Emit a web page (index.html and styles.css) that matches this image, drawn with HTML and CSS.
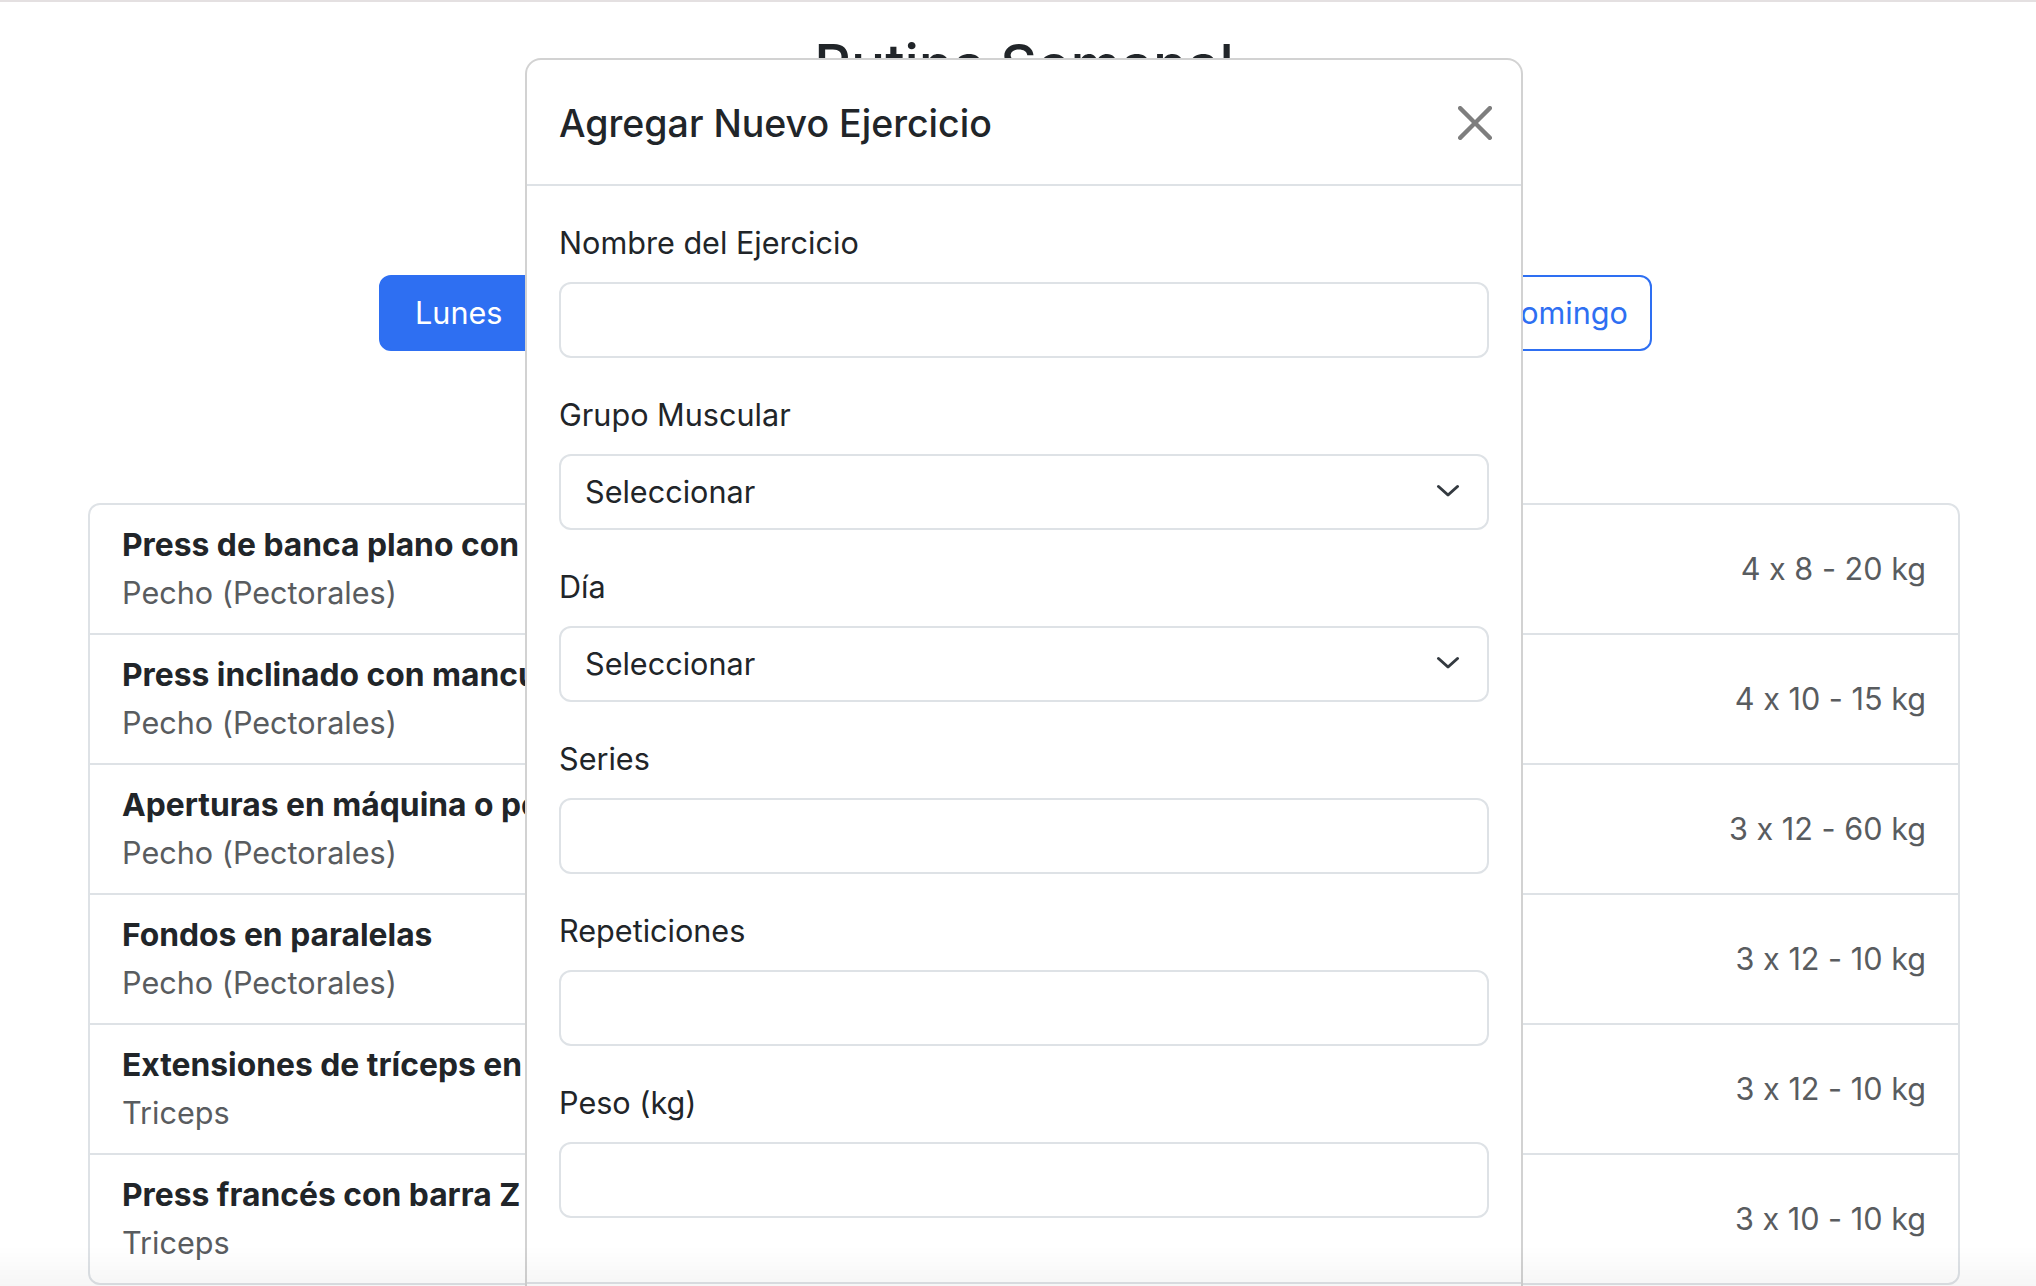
FILE: index.html
```html
<!DOCTYPE html>
<html lang="es">
<head>
<meta charset="utf-8">
<title>Rutina Semanal</title>
<link rel="stylesheet" href="styles.css">
</head>
<body>
<main class="page">
  <h2 class="page-title">Rutina Semanal</h2>
  <nav class="days">
    <button class="day day-active">Lunes</button>
    <button class="day">Martes</button>
    <button class="day">Miércoles</button>
    <button class="day">Jueves</button>
    <button class="day">Viernes</button>
    <button class="day">Sábado</button>
    <button class="day">Domingo</button>
  </nav>
  <ul class="exercise-list">
    <li class="exercise">
      <div class="exercise-info">
        <div class="exercise-name">Press de banca plano con barra</div>
        <div class="exercise-group">Pecho (Pectorales)</div>
      </div>
      <div class="exercise-stats">4 x 8 - 20 kg</div>
    </li>
    <li class="exercise">
      <div class="exercise-info">
        <div class="exercise-name">Press inclinado con mancuernas</div>
        <div class="exercise-group">Pecho (Pectorales)</div>
      </div>
      <div class="exercise-stats">4 x 10 - 15 kg</div>
    </li>
    <li class="exercise">
      <div class="exercise-info">
        <div class="exercise-name">Aperturas en máquina o peck deck</div>
        <div class="exercise-group">Pecho (Pectorales)</div>
      </div>
      <div class="exercise-stats">3 x 12 - 60 kg</div>
    </li>
    <li class="exercise">
      <div class="exercise-info">
        <div class="exercise-name">Fondos en paralelas</div>
        <div class="exercise-group">Pecho (Pectorales)</div>
      </div>
      <div class="exercise-stats">3 x 12 - 10 kg</div>
    </li>
    <li class="exercise">
      <div class="exercise-info">
        <div class="exercise-name">Extensiones de tríceps en polea</div>
        <div class="exercise-group">Triceps</div>
      </div>
      <div class="exercise-stats">3 x 12 - 10 kg</div>
    </li>
    <li class="exercise">
      <div class="exercise-info">
        <div class="exercise-name">Press francés con barra Z</div>
        <div class="exercise-group">Triceps</div>
      </div>
      <div class="exercise-stats">3 x 10 - 10 kg</div>
    </li>
  </ul>
</main>

<div class="modal">
  <div class="modal-content">
    <div class="modal-header">
      <h5 class="modal-title">Agregar Nuevo Ejercicio</h5>
      <button class="btn-close" aria-label="Cerrar">
        <svg viewBox="0 0 16 16" width="34" height="34" aria-hidden="true"><path fill="#000" d="M.293.293a1 1 0 0 1 1.414 0L8 6.586 14.293.293a1 1 0 1 1 1.414 1.414L9.414 8l6.293 6.293a1 1 0 0 1-1.414 1.414L8 9.414l-6.293 6.293a1 1 0 0 1-1.414-1.414L6.586 8 .293 1.707a1 1 0 0 1 0-1.414z"/></svg>
      </button>
    </div>
    <div class="modal-body">
      <div class="field">
        <label class="field-label">Nombre del Ejercicio</label>
        <input class="field-input" type="text">
      </div>
      <div class="field">
        <label class="field-label">Grupo Muscular</label>
        <div class="select-wrap">
          <select class="field-input field-select"><option>Seleccionar</option></select>
          <svg class="select-arrow" viewBox="0 0 24 13" width="24" height="13" aria-hidden="true"><path d="M2.5 2.5 L12 11 L21.5 2.5" fill="none" stroke="#343a40" stroke-width="3" stroke-linecap="round" stroke-linejoin="round"/></svg>
        </div>
      </div>
      <div class="field">
        <label class="field-label">Día</label>
        <div class="select-wrap">
          <select class="field-input field-select"><option>Seleccionar</option></select>
          <svg class="select-arrow" viewBox="0 0 24 13" width="24" height="13" aria-hidden="true"><path d="M2.5 2.5 L12 11 L21.5 2.5" fill="none" stroke="#343a40" stroke-width="3" stroke-linecap="round" stroke-linejoin="round"/></svg>
        </div>
      </div>
      <div class="field">
        <label class="field-label">Series</label>
        <input class="field-input" type="number">
      </div>
      <div class="field">
        <label class="field-label">Repeticiones</label>
        <input class="field-input" type="number">
      </div>
      <div class="field">
        <label class="field-label">Peso (kg)</label>
        <input class="field-input" type="number">
      </div>
    </div>
    <div class="modal-footer"></div>
  </div>
</div>

<div class="bottom-fade"></div>
</body>
</html>
```

FILE: styles.css
```css
*, *::before, *::after { box-sizing: border-box; }

html, body {
  margin: 0;
  height: 100%;
  overflow: hidden;
}

body {
  font-family: Inter, "Noto Sans", sans-serif;
  font-size: 30.6px;
  line-height: 48px;
  font-feature-settings: "calt" 0;
  color: #212529;
  background: #fff;
  border-top: 2px solid #e4e0e1;
}

.page {
  padding: 29px 76px 0 88px;
}

.page-title {
  margin: 0;
  text-align: center;
  font-size: 56.8px;
  font-weight: 500;
  line-height: 68px;
}

.days {
  display: flex;
  justify-content: space-between;
  margin: 176px 308px 0 291px;
}

.day {
  height: 76px;
  padding: 0 22px;
  border: 2px solid #2e6ff2;
  border-radius: 12px;
  background: #fff;
  color: #2e6ff2;
  font: inherit;
  line-height: 48px;
}

.day-active {
  background: #2e6ff2;
  color: #fff;
  padding: 0 34px;
}

.exercise-list {
  list-style: none;
  margin: 152px 0 0;
  padding: 0;
  border: 2px solid #dee2e6;
  border-radius: 12px;
}

.exercise {
  display: flex;
  align-items: center;
  justify-content: space-between;
  padding: 16px 32px;
}

.exercise + .exercise {
  border-top: 2px solid #dee2e6;
}

.exercise-name {
  font-weight: 700;
  font-size: 31.8px;
}

.exercise-group,
.exercise-stats { color: #595c5f; }

/* modal dialog overlaying the page */
.modal {
  position: absolute;
  top: 58px;
  left: 525px;
  width: 998px;
}

.modal-content {
  background: #fff;
  border: 2px solid rgba(0, 0, 0, 0.175);
  border-radius: 16px;
}

.modal-header {
  display: flex;
  align-items: center;
  justify-content: space-between;
  padding: 34px 32px 30px;
  border-bottom: 2px solid #dee2e6;
}

.modal-title {
  margin: 0;
  font-size: 37.5px;
  font-weight: 500;
  line-height: 60px;
}

.btn-close {
  display: flex;
  width: 34px;
  height: 34px;
  padding: 0;
  margin: -3px -3px 0 0;
  border: 0;
  background: transparent;
  opacity: 0.5;
}

.modal-body {
  padding: 32px;
}

.field { margin-bottom: 32px; }

.field-label {
  display: block;
  padding-top: 1px;
  margin-bottom: 15px;
}

.field-input {
  display: block;
  width: 100%;
  height: 76px;
  padding: 12px 24px;
  border: 2px solid #dee2e6;
  border-radius: 12px;
  font: inherit;
  line-height: 48px;
  color: #212529;
  background: #fff;
  appearance: none;
  -webkit-appearance: none;
  outline: none;
}

.select-wrap { position: relative; }

.select-arrow {
  position: absolute;
  right: 29px;
  top: 30px;
  pointer-events: none;
}

.modal-footer {
  height: 124px;
  border-top: 2px solid #dee2e6;
}

.bottom-fade {
  position: fixed;
  left: 0;
  right: 0;
  bottom: 0;
  height: 40px;
  background: linear-gradient(to bottom, rgba(0, 0, 0, 0), rgba(0, 0, 0, 0.035));
  pointer-events: none;
}
```
